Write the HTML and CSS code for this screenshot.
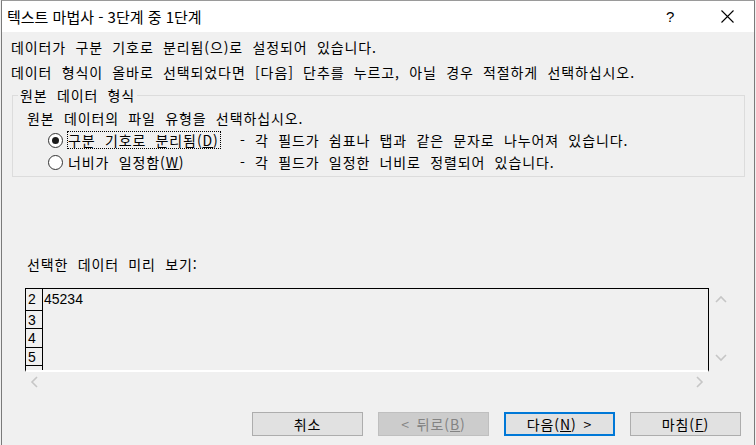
FILE: index.html
```html
<!DOCTYPE html>
<html lang="ko">
<head>
  <meta charset="UTF-8" />
  <title>텍스트 마법사</title>
  <link rel="stylesheet" href="styles.css">
</head>
<body>

  <div class="window">
    <div class="titlebar">
      <span class="title">텍스트 마법사 - 3단계 중 1단계</span>
      <span class="help">?</span>
      <span class="close">
        <svg width="13" height="13" viewBox="0 0 13 13"><path d="M0.5 0.5 L12.5 12.5 M12.5 0.5 L0.5 12.5" stroke="#000" stroke-width="1.1" fill="none"/></svg>
      </span>
    </div>

    <div class="content">
      <p class="intro">데이터가 구분 기호로 분리됨(으)로 설정되어 있습니다.</p>
      <p class="intro second">데이터 형식이 올바로 선택되었다면 [다음] 단추를 누르고, 아닐 경우 적절하게 선택하십시오.</p>

      <div class="group">
        <div class="legend">원본 데이터 형식</div>
        <p class="prompt">원본 데이터의 파일 유형을 선택하십시오.</p>
        <div class="option">
          <span class="radio checked"></span>
          <span class="label"><span class="focus">구분 기호로 분리됨(<u>D</u>)</span></span>
          <span class="desc">- 각 필드가 쉼표나 탭과 같은 문자로 나누어져 있습니다.</span>
        </div>
        <div class="option">
          <span class="radio"></span>
          <span class="label"><span class="plain">너비가 일정함(<u>W</u>)</span></span>
          <span class="desc">- 각 필드가 일정한 너비로 정렬되어 있습니다.</span>
        </div>
      </div>

      <p class="preview-label">선택한 데이터 미리 보기:</p>

      <div class="preview">
        <div class="preview-main">
          <div class="grid">
            <div class="row first"><span class="num">2</span><span class="cell">45234</span></div>
            <div class="row"><span class="num">3</span><span class="cell"></span></div>
            <div class="row tall"><span class="num">4</span><span class="cell"></span></div>
            <div class="row"><span class="num">5</span><span class="cell"></span></div>
            <div class="row"><span class="num">&nbsp;</span><span class="cell"></span></div>
          </div>
          <div class="vscroll">
            <svg width="12" height="8" viewBox="0 0 12 8"><path d="M1 7 L6 2 L11 7" stroke="#c6c6c6" stroke-width="1.6" fill="none"/></svg>
            <svg width="12" height="8" viewBox="0 0 12 8"><path d="M1 1 L6 6 L11 1" stroke="#c6c6c6" stroke-width="1.6" fill="none"/></svg>
          </div>
        </div>
        <div class="hscroll">
          <svg width="8" height="12" viewBox="0 0 8 12"><path d="M7 1 L2 6 L7 11" stroke="#c6c6c6" stroke-width="1.6" fill="none"/></svg>
          <svg width="8" height="12" viewBox="0 0 8 12"><path d="M1 1 L6 6 L1 11" stroke="#c6c6c6" stroke-width="1.6" fill="none"/></svg>
        </div>
      </div>

      <div class="buttons">
        <button class="btn">취소</button>
        <button class="btn disabled">&lt; 뒤로(<u>B</u>)</button>
        <button class="btn default">다음(<u>N</u>) &gt;</button>
        <button class="btn">마침(<u>F</u>)</button>
      </div>
    </div>
  </div>

</body>
</html>
```

FILE: styles.css
```css
body {
  margin: 0;
  background: #f0f0f0;
  font-family: "Noto Sans CJK KR", "Noto Sans", sans-serif;
  font-size: 14px;
  letter-spacing: 0.9px;
  word-spacing: 4.5px;
  color: #000;
  overflow: hidden;
}

.window {
  width: 754px;
  height: 445px;
  margin-left: 1px;
  border-left: 1px solid #7a7a7a;
  border-right: 1px solid #7a7a7a;
  border-top: 1px solid #9a9a9a;
  box-sizing: border-box;
  background: #f0f0f0;
}

.titlebar {
  height: 31px;
  background: #fff;
  display: flex;
  align-items: center;
  padding-left: 5px;
}

.title {
  font-size: 15px;
  letter-spacing: 0;
  word-spacing: 0;
  flex: 1;
  margin-top: -1px;
}

.help {
  font-family: "Liberation Sans", sans-serif;
  font-size: 15px;
  letter-spacing: 0;
  width: 55px;
}

.close {
  width: 33px;
  display: flex;
}

.content {
  padding-left: 9px;
}

p {
  margin: 0;
  line-height: 16px;
}

.intro {
  padding-top: 7px;
}

.second {
  padding-top: 9px;
}

.group {
  margin: 15px 0 0 1px;
  width: 733px;
  height: 82px;
  box-sizing: border-box;
  border: 1px solid #dcdcdc;
  padding-left: 14px;
}

.legend {
  width: fit-content;
  line-height: 16px;
  margin: -9px 0 0 -9px;
  padding: 0 2px 0 2px;
  background: #f0f0f0;
}

.prompt {
  margin-top: 7px;
}

.option {
  display: flex;
  align-items: center;
  height: 22px;
  padding-left: 21px;
}

.prompt + .option {
  margin-top: 3px;
}

.radio {
  width: 15px;
  height: 15px;
  border: 1px solid #333;
  border-radius: 50%;
  background: #fff;
  box-sizing: border-box;
  position: relative;
  flex: none;
}

.radio.checked::after {
  content: "";
  position: absolute;
  left: 3px;
  top: 3px;
  width: 7px;
  height: 7px;
  border-radius: 50%;
  background: #1a1a1a;
}

.label {
  width: 173px;
  margin-left: 4px;
  flex: none;
}

.focus {
  display: inline-block;
  border: 1px dotted #000;
  line-height: 16px;
  padding: 0 1px 0 0;
}

.plain {
  display: inline-block;
  padding-left: 1px;
}

.preview-label {
  margin: 79px 0 0 16px;
}

.preview {
  margin: 16px 0 0 14px;
  width: 705px;
}

.preview-main {
  display: flex;
}

.grid {
  width: 686px;
  height: 84px;
  border: 1px solid #000;
  border-bottom: 2px solid #fff;
  box-sizing: border-box;
  overflow: hidden;
  font-family: "Liberation Sans", sans-serif;
  font-size: 14px;
  letter-spacing: 0;
}

.row {
  display: flex;
  height: 18px;
  line-height: 18px;
}

.row.first {
  height: 22px;
  line-height: 21px;
}

.row.tall {
  height: 19px;
}

.num {
  width: 17px;
  box-sizing: border-box;
  border-right: 1px solid #000;
  border-bottom: 1px solid #000;
  padding-left: 2px;
}

.cell {
  padding-left: 1px;
}

.vscroll {
  width: 19px;
  display: flex;
  flex-direction: column;
  justify-content: space-between;
  align-items: center;
  padding: 7px 0 10px 2px;
}

.hscroll {
  height: 20px;
  width: 686px;
  display: flex;
  justify-content: space-between;
  align-items: center;
  padding: 0 7px 0 5px;
  box-sizing: border-box;
}

.buttons {
  display: flex;
  gap: 15px;
  margin: 20px 0 0 241px;
}

.btn {
  width: 111px;
  height: 24px;
  background: #e1e1e1;
  border: 1px solid #adadad;
  font-family: inherit;
  font-size: 14px;
  letter-spacing: 0.9px;
  word-spacing: 2px;
  padding: 0;
  color: #000;
}

.btn.disabled {
  background: #cccccc;
  border-color: #bfbfbf;
  color: #838383;
}

.btn.default {
  border: 2px solid #0078d7;
}
```
